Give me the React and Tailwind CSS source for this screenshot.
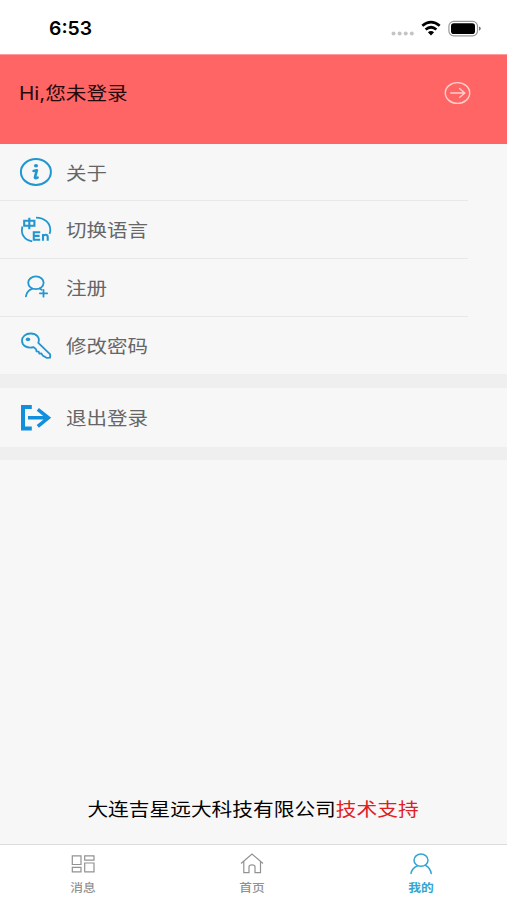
import React from 'react';

const BLUE = '#2196cf';

const InfoIcon = () => (
  <svg width="40" height="36" viewBox="0 0 40 36" fill="none" stroke={BLUE}>
    <ellipse cx="19.9" cy="18" rx="15" ry="12.9" strokeWidth="2" />
    <ellipse cx="20" cy="11.8" rx="2.1" ry="1.8" fill={BLUE} stroke="none" />
    <path d="M17.6 16.9L20.9 16.2L19 23.2Q18.7 24.8 21.6 23.6" strokeWidth="2.6" strokeLinejoin="round" strokeLinecap="round" />
  </svg>
);

const LanguageIcon = () => (
  <svg width="40" height="36" viewBox="0 0 40 36" fill="none" stroke={BLUE} strokeWidth="1.8">
    <path d="M20 5.6C28.5 5.6 34.3 11 34.3 18.2Q34.3 20.2 33.5 21.8" />
    <path d="M6.4 14.5C4.2 22.5 9 28.3 16.2 29.3" />
    <path d="M8.2 8.8H18.4V13.8H8.2ZM13.3 5.7V17.2" strokeWidth="2.1" />
    <path d="M24.2 20.3H17.8V27.7H24.2M17.8 23.9H23.6" strokeWidth="2.1" />
    <path d="M27 28.7V21.9M27 24.5Q27.6 22.7 29.5 22.7Q31.7 22.7 31.7 24.9V28.7" strokeWidth="2.1" />
  </svg>
);

const RegisterIcon = () => (
  <svg width="40" height="36" viewBox="0 0 40 36" fill="none" stroke={BLUE} strokeWidth="1.8" strokeLinecap="round">
    <ellipse cx="19.9" cy="12.8" rx="7.7" ry="6.4" />
    <path d="M9.9 26.3C10.5 22.6 12.6 20.1 16 18.8M23.7 18.5L25.7 19.7" />
    <path d="M27.5 19.9V26.7M23.9 23.3H31.2" />
  </svg>
);

const KeyIcon = () => (
  <svg width="40" height="36" viewBox="0 0 40 36" fill="none" stroke={BLUE} strokeWidth="1.8" strokeLinejoin="round">
    <path d="M22.3 14.9C24.4 9.4 20.3 5.4 14.6 5.5C9.5 5.6 6 8.6 6 12.7C6 17.6 11.2 20.8 17.6 19.1L20.2 21.4L20.5 23.3L22.7 23.7L23.3 25.6L25.4 25.4L26.6 27.4L30.5 29.8L34.1 29.6L34.2 26.4Z" />
    <ellipse cx="12" cy="11.3" rx="2.2" ry="1.9" fill={BLUE} stroke="none" />
  </svg>
);

const LogoutIcon = () => (
  <svg width="40" height="36" viewBox="0 0 40 36" fill="none" stroke="#118edc">
    <path d="M15.8 6.9H7V28.6H15.8" strokeWidth="4" />
    <path d="M12 17.8H33M21.8 9.3L32.4 17.8L21.8 26.3" strokeWidth="3.5" />
  </svg>
);

const menuItems = [
  { label: '关于', Icon: InfoIcon },
  { label: '切换语言', Icon: LanguageIcon },
  { label: '注册', Icon: RegisterIcon },
  { label: '修改密码', Icon: KeyIcon },
];

const MenuRow = ({ label, Icon }) => (
  <div className="flex h-full items-center pl-4">
    <Icon />
    <span className="mt-[3px] ml-2.5 origin-left scale-x-[1.14] text-[18px] leading-6 text-[#666]">{label}</span>
  </div>
);

const TabItem = ({ label, active, children }) => (
  <button className={`flex flex-1 flex-col items-center pt-[6px] pr-[3px] ${active ? 'text-[#35a5d0]' : 'text-[#929292]'}`}>
    <svg width="28" height="26" viewBox="0 0 28 26" fill="none" stroke="currentColor" strokeWidth="1.2">
      {children}
    </svg>
    <span className={`mt-[3px] scale-x-[1.16] text-[11px] leading-4 ${active ? 'font-bold' : 'font-medium'}`}>{label}</span>
  </button>
);

export default function App() {
  return (
    <main className="flex h-[900px] w-[507px] flex-col overflow-hidden bg-[#f7f7f7] font-['Inter','Noto_Sans_CJK_SC',sans-serif]">
      {/* Status bar */}
      <div className="flex h-[54px] shrink-0 items-center justify-between bg-white pr-[25px] pl-[49px]">
        <span className="mt-[5px] origin-left scale-x-[1.02] text-[19px] font-semibold text-black">6:53</span>
        <svg width="96" height="24" viewBox="0 0 96 24" fill="none" className="mt-[3px]">
          <g fill="#c4c4c4">
            <circle cx="7.5" cy="16.6" r="2" />
            <circle cx="13.6" cy="16.6" r="2" />
            <circle cx="19.7" cy="16.6" r="2" />
            <circle cx="25.8" cy="16.6" r="2" />
          </g>
          <path d="M36.3 8.8Q45 1.4 53.7 8.8M39.6 12.5Q45 8 50.4 12.5" stroke="#000" strokeWidth="2.7" />
          <path d="M41.9 15.3Q45 12.9 48.1 15.3L45 18.6Z" fill="#000" />
          <rect x="62.9" y="4.4" width="28.6" height="14.4" rx="4.8" stroke="#999" strokeWidth="1.2" />
          <rect x="65" y="6.2" width="24" height="10.8" rx="2.8" fill="#000" />
          <path d="M93 9.4Q94.8 10 94.8 11.6Q94.8 13.2 93 13.8Z" fill="#777" />
        </svg>
      </div>

      {/* Login banner */}
      <header className="flex h-[90px] shrink-0 items-start justify-between border-t border-[#ff9c9c] bg-[#ff6565] pt-[25px] pr-[35px] pl-[19px]">
        <span className="mt-0.5 origin-left scale-x-[1.145] text-[18px] leading-6 text-[#26090b]">Hi,您未登录</span>
        <svg width="28" height="26" viewBox="0 0 28 26" fill="none" stroke="#ffd0cb" strokeWidth="1.4">
          <ellipse cx="13.5" cy="13" rx="12.2" ry="10.4" />
          <path d="M6.2 13H20.5M15.2 8.3L20.8 13L15.2 17.7" />
        </svg>
      </header>

      <section className="flex h-[230px] shrink-0 flex-col">
        {menuItems.map((item, i) => (
          <div key={item.label} className={`mr-[39px] ${i === 0 || i === 3 ? 'h-[57px]' : 'h-[58px]'} ${i < 3 ? 'border-b border-[#e8e8e8]' : ''}`}>
            <MenuRow {...item} />
          </div>
        ))}
      </section>

      <section className="h-[86px] shrink-0 border-t-[14px] border-b-[13px] border-[#efefef]">
        <MenuRow label="退出登录" Icon={LogoutIcon} />
      </section>

      <footer className="mt-auto flex justify-center pr-[2px] pb-[22px]">
        <p className="scale-x-[1.15] text-[18px] leading-6 whitespace-nowrap text-black">
          大连吉星远大科技有限公司<span className="text-[#e02020]">技术支持</span>
        </p>
      </footer>

      {/* Tab bar */}
      <nav className="flex h-14 shrink-0 border-t border-[#dcdcdc] bg-white">
        <TabItem label="消息">
          <path d="M3.3 4.8H12V13.5H3.3ZM15.7 4.8H25V9.2H15.7ZM15.7 12H25V20.8H15.7ZM3.3 16.3H12V20.8H3.3Z" />
        </TabItem>
        <TabItem label="首页">
          <path d="M3 12.5L14 3L25 12.5M5.8 10.5V21.6H11V15.8Q11 13.8 14 13.8Q17 13.8 17 15.8V21.6H22.5V10.5" />
        </TabItem>
        <TabItem label="我的" active>
          <g strokeWidth="1.5" strokeLinecap="round">
            <ellipse cx="14" cy="9.2" rx="7" ry="6.1" />
            <path d="M4 22.5Q4.7 17.2 10.6 14.7M18.7 14.5Q23.3 17 24.2 22.5" />
          </g>
        </TabItem>
      </nav>
    </main>
  );
}
